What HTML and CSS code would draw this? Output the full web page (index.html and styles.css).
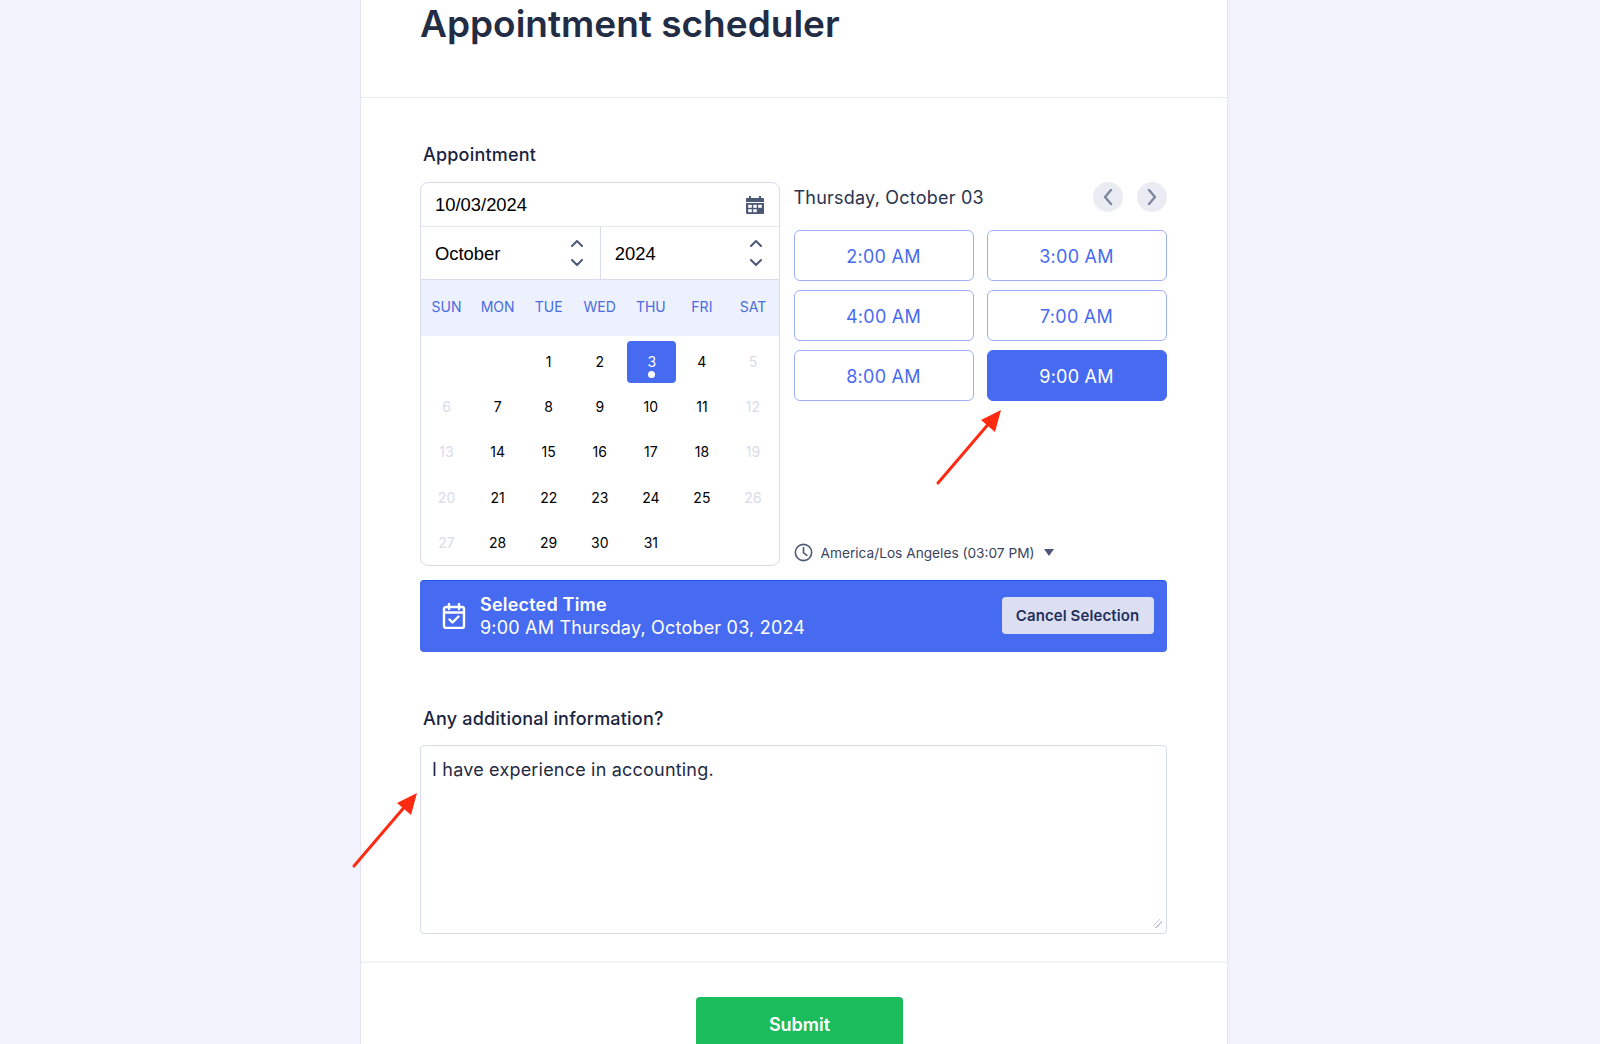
FILE: index.html
```html
<!DOCTYPE html>
<html lang="en">
<head>
<meta charset="utf-8">
<title>Appointment scheduler</title>
<link rel="stylesheet" href="styles.css">
</head>
<body>
<div class="card">
  <header class="head"><h1>Appointment scheduler</h1></header>
  <main class="main">
    <label class="label">Appointment</label>
    <div class="picker">
      <div class="calendar">
        <div class="date-row">
          <span>10/03/2024</span>
          <svg class="cal-icon" viewBox="0 0 20 20"><path fill="#4d5876" d="M4 1h2v2h8V1h2v2h2a1 1 0 0 1 1 1v3H1V4a1 1 0 0 1 1-1h2zM1 8h18v10a1 1 0 0 1-1 1H2a1 1 0 0 1-1-1z"/><g fill="#fff"><rect x="3.2" y="9.8" width="3.6" height="3"/><rect x="8.2" y="9.8" width="3.6" height="3"/><rect x="13.2" y="9.8" width="3.6" height="3"/><rect x="3.2" y="14.2" width="3.6" height="3"/><rect x="8.2" y="14.2" width="3.6" height="3"/></g></svg>
        </div>
        <div class="select-row">
          <div class="select">
            <span>October</span>
            <svg class="spin" viewBox="0 0 14 28"><path d="M2 7l5-5 5 5M2 21l5 5 5-5"/></svg>
          </div>
          <div class="select">
            <span>2024</span>
            <svg class="spin" viewBox="0 0 14 28"><path d="M2 7l5-5 5 5M2 21l5 5 5-5"/></svg>
          </div>
        </div>
        <div class="week"><span>SUN</span><span>MON</span><span>TUE</span><span>WED</span><span>THU</span><span>FRI</span><span>SAT</span></div>
        <div class="days">
          <span></span><span></span><span>1</span><span>2</span><span class="today">3</span><span>4</span><span class="off">5</span>
          <span class="off">6</span><span>7</span><span>8</span><span>9</span><span>10</span><span>11</span><span class="off">12</span>
          <span class="off">13</span><span>14</span><span>15</span><span>16</span><span>17</span><span>18</span><span class="off">19</span>
          <span class="off">20</span><span>21</span><span>22</span><span>23</span><span>24</span><span>25</span><span class="off">26</span>
          <span class="off">27</span><span>28</span><span>29</span><span>30</span><span>31</span><span></span><span></span>
        </div>
      </div>
      <div class="times">
        <div class="times-head">
          <span class="day-title">Thursday, October 03</span>
          <div class="navs">
            <button class="nav"><svg viewBox="0 0 12 18"><path d="M9 2L3 9l6 7"/></svg></button>
            <button class="nav"><svg viewBox="0 0 12 18"><path d="M3 2l6 7-6 7"/></svg></button>
          </div>
        </div>
        <div class="slots">
          <button class="slot">2:00 AM</button>
          <button class="slot">3:00 AM</button>
          <button class="slot">4:00 AM</button>
          <button class="slot">7:00 AM</button>
          <button class="slot">8:00 AM</button>
          <button class="slot active">9:00 AM</button>
        </div>
        <div class="zone">
          <svg class="clock" viewBox="0 0 20 20"><circle cx="10" cy="10" r="8.6"/><path d="M10 5v5.4l3.6 2.6"/></svg>
          <span>America/Los Angeles (03:07 PM)</span>
          <i class="caret"></i>
        </div>
      </div>
    </div>
    <div class="banner">
      <svg class="banner-icon" viewBox="0 0 24 26"><path d="M7 1v5M17 1v5M2 9.5h20M4 4h16a2 2 0 0 1 2 2v17a2 2 0 0 1-2 2H4a2 2 0 0 1-2-2V6a2 2 0 0 1 2-2zM7.5 16.5l3 3 6-6"/></svg>
      <div class="banner-text">
        <strong>Selected Time</strong>
        <span>9:00 AM Thursday, October 03, 2024</span>
      </div>
      <button class="cancel">Cancel Selection</button>
    </div>
    <label class="label second" for="info">Any additional information?</label>
    <textarea id="info" class="info">I have experience in accounting.</textarea>
  </main>
  <footer class="foot"><button class="submit">Submit</button></footer>
</div>
<svg class="arrow arrow-one" viewBox="0 0 70 80"><path d="M3 76L56 14" /><polygon points="66,3 60,25 46,13"/></svg>
<svg class="arrow arrow-two" viewBox="0 0 70 80"><path d="M3 76L56 14" /><polygon points="66,3 60,25 46,13"/></svg>
</body>
</html>
```
FILE: styles.css
```css
* { box-sizing: border-box; }
html, body { margin: 0; height: 1044px; overflow: hidden; }
body {
  background: #f2f2fd;
  font-family: Inter, "Noto Sans", sans-serif;
  color: #1f2a44;
  position: relative;
}
button { font-family: inherit; cursor: pointer; }

.card {
  margin-left: 360px;
  width: 868px;
  height: 1044px;
  overflow: hidden;
  background: #fff;
  border-left: 1.5px solid #e3e3f4;
  border-right: 1.5px solid #e3e3f4;
}
.head {
  height: 97.5px;
  padding-left: 59px;
  border-bottom: 1px solid #e9ebf3;
}
.head h1 {
  margin: 0;
  font-size: 37px;
  font-weight: 600;
  line-height: 48px;
  color: #232c45;
}

.main { padding: 45.5px 60.5px 27px 59px; }
.label {
  display: block;
  padding-left: 3px;
  font-size: 18px;
  font-weight: 450;
  line-height: 24px;
  letter-spacing: 0.2px;
  color: #1a2440;
}
.second { margin-top: 55px; }

.picker {
  display: grid;
  grid-template-columns: 359.5px 373px;
  column-gap: 14px;
  margin-top: 14.5px;
  height: 384px;
}

.calendar {
  border: 1px solid #d8dbe9;
  border-radius: 8px;
  overflow: hidden;
  display: flex;
  flex-direction: column;
  color: #000;
}
.date-row {
  height: 44px;
  flex: none;
  display: flex;
  align-items: center;
  justify-content: space-between;
  padding: 1px 14px 0 14px;
  font-family: "Liberation Sans", Arial, sans-serif;
  font-size: 18.4px;
  border-bottom: 1px solid #e8e9f2;
}
.cal-icon { width: 20px; height: 20px; }
.select-row {
  height: 53px;
  flex: none;
  display: grid;
  grid-template-columns: 1fr 1fr;
  border-bottom: 1px solid #d8dbe9;
}
.select {
  display: flex;
  align-items: center;
  justify-content: space-between;
  padding: 0 16px 0 14px;
  font-family: "Liberation Sans", Arial, sans-serif;
  font-size: 18.4px;
}
.select span { padding-top: 2px; }
.select + .select { border-left: 1px solid #d8dbe9; }
.spin { width: 14px; height: 28px; }
.spin path { fill: none; stroke: #4d5876; stroke-width: 2; stroke-linecap: round; stroke-linejoin: round; }
.week {
  height: 56px;
  flex: none;
  display: grid;
  grid-template-columns: repeat(7, 1fr);
  align-items: center;
  text-align: center;
  padding-bottom: 3px;
  background: #edf1fd;
  color: #4a6ce0;
  font-size: 14px;
}
.days {
  display: grid;
  grid-template-columns: repeat(7, 1fr);
  grid-auto-rows: 45.4px;
  text-align: center;
  font-size: 14px;
  padding-top: 3px;
}
.days span {
  display: flex;
  align-items: center;
  justify-content: center;
  position: relative;
}
.days .off { color: #d9dbe8; }
.days .today {
  background: #476bf0;
  color: #fff;
  border-radius: 4px;
  height: 42px;
  margin: 2px 0 0 2px;
}
.days .today::after {
  content: "";
  position: absolute;
  left: 50%;
  bottom: 5px;
  width: 7px;
  height: 7px;
  margin-left: -3.5px;
  border-radius: 50%;
  background: #fff;
}

.times {
  display: flex;
  flex-direction: column;
}
.times-head {
  display: flex;
  align-items: center;
  justify-content: space-between;
  height: 30px;
}
.day-title { padding-top: 2px; font-size: 18px; letter-spacing: 0.22px; color: #2a3350; }
.navs { display: flex; gap: 14px; }
.nav {
  width: 30px;
  height: 30px;
  padding: 0;
  border: 0;
  border-radius: 50%;
  background: #ebecf3;
  display: flex;
  align-items: center;
  justify-content: center;
}
.nav svg { width: 12px; height: 18px; }
.nav path { fill: none; stroke: #7b869f; stroke-width: 2.4; stroke-linecap: round; stroke-linejoin: round; }
.slots {
  display: grid;
  grid-template-columns: 180px 180px;
  justify-content: space-between;
  grid-auto-rows: 51px;
  row-gap: 9px;
  margin-top: 18px;
}
.slot {
  padding: 2px 0 0;
  border: 1px solid #9db0f5;
  border-radius: 6px;
  background: #fff;
  color: #476bf0;
  font-size: 18px;
  letter-spacing: 0.25px;
}
.slot.active {
  background: #476bf0;
  border-color: #476bf0;
  color: #fff;
}
.zone {
  margin-top: auto;
  margin-bottom: 3px;
  display: flex;
  align-items: center;
  height: 20px;
  font-size: 13.7px;
  color: #3a4460;
}
.clock { width: 19px; height: 19px; margin-right: 8px; }
.clock circle, .clock path { fill: none; stroke: #4d5876; stroke-width: 1.7; stroke-linecap: round; }
.caret {
  width: 0;
  height: 0;
  margin-left: 9px;
  border-left: 5px solid transparent;
  border-right: 5px solid transparent;
  border-top: 7px solid #4d5876;
}

.banner {
  margin-top: 14px;
  height: 72px;
  display: flex;
  align-items: center;
  padding: 0 13px 0 22px;
  background: #476bf0;
  border-top: 1px solid #2058e8;
  border-radius: 4px;
  color: #fff;
}
.banner-icon { width: 24px; height: 26px; flex: none; }
.banner-icon path { fill: none; stroke: #fff; stroke-width: 2.4; stroke-linecap: round; stroke-linejoin: round; }
.banner-text {
  margin-left: 14px;
  display: flex;
  flex-direction: column;
  gap: 1px;
  font-size: 18px;
  line-height: 22px;
  letter-spacing: 0.2px;
}
.banner-text strong { font-weight: 600; }
.cancel {
  margin-left: auto;
  margin-top: -1px;
  width: 152px;
  height: 37px;
  border: 0;
  border-radius: 4px;
  background: #dcdff2;
  color: #242f5c;
  font-size: 15px;
  font-weight: 600;
  letter-spacing: 0.1px;
}

.info {
  display: block;
  width: 100%;
  height: 189px;
  margin-top: 14px;
  padding: 12px 11px;
  border: 1px solid #d8dbe9;
  border-radius: 4px;
  font-family: inherit;
  font-size: 18px;
  line-height: 24px;
  letter-spacing: 0.2px;
  color: #1f2a44;
  outline: 0;
}
.info::-webkit-resizer {
  background: linear-gradient(135deg, transparent 36%, #c4c6dc 36%, #c4c6dc 44%, transparent 44%, transparent 61%, #c4c6dc 61%, #c4c6dc 69%, transparent 69%) no-repeat 2px 1px / 9px 9px;
}

.foot {
  border-top: 2px solid #f3f3fa;
  padding-top: 34px;
  padding-left: 335px;
}
.submit {
  width: 207px;
  height: 55px;
  border: 0;
  border-radius: 4px;
  background: #1abc5b;
  color: #fff;
  font-size: 18px;
  font-weight: 600;
}

.arrow { position: absolute; width: 70px; height: 80px; }
.arrow path { fill: none; stroke: #ff2a12; stroke-width: 3; stroke-linecap: round; }
.arrow polygon { fill: #ff2a12; }
.arrow-one { left: 935px; top: 407px; }
.arrow-two { left: 351px; top: 790px; }
```
